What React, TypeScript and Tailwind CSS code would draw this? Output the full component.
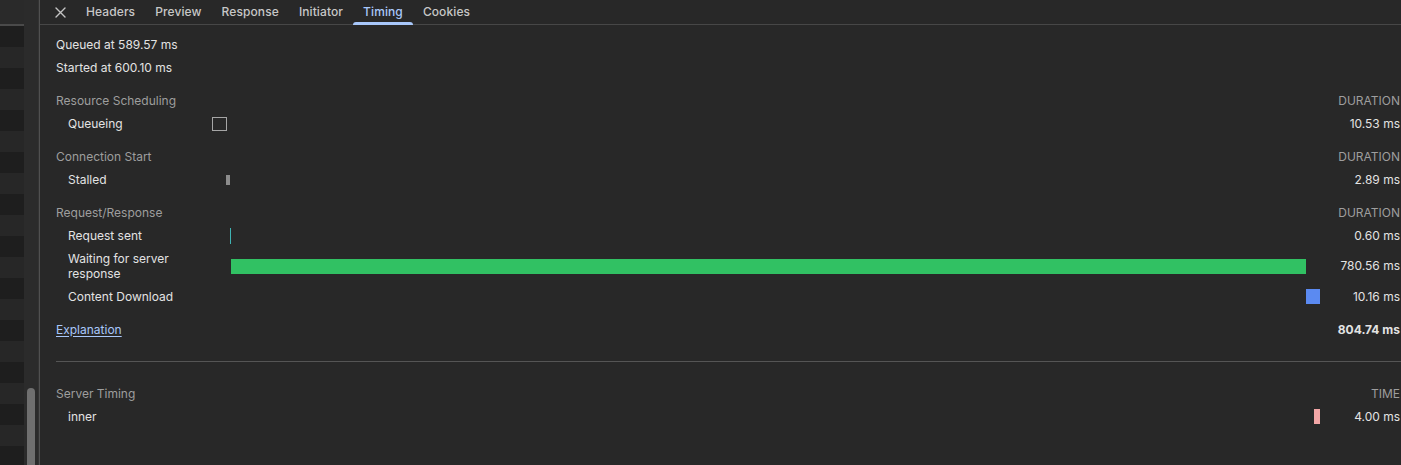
import React from "react";

const font = { fontFamily: "Inter, 'Noto Sans', 'Liberation Sans', sans-serif" };

function LeftStrip() {
  const rows = Array.from({ length: 21 });
  return (
    <div className="flex h-[465px] shrink-0">
      <div className="w-[24px] flex flex-col overflow-hidden bg-[#262626]">
        <div className="h-[24px] shrink-0 bg-[#2a2a2a]" />
        <div className="h-[2px] shrink-0 bg-[#4a4a4a]" />
        {rows.map((_, i) => (
          <div
            key={i}
            className={
              i % 2 === 0
                ? "h-[21px] shrink-0 bg-[#1e1e1e]"
                : "h-[21px] shrink-0 bg-[#272727]"
            }
          />
        ))}
      </div>
      <div className="w-[14px] bg-[#2b2b2b] flex flex-col justify-end items-center">
        <div className="w-[8px] h-[77px] rounded-t-[4px] bg-[#6f6f6f]" />
      </div>
      <div className="w-[1px] bg-[#333333]" />
      <div className="w-[1px] bg-[#505050]" />
    </div>
  );
}

function Tabs() {
  const tabs = ["Headers", "Preview", "Response", "Initiator", "Timing", "Cookies"];
  return (
    <div className="h-[25px] flex items-stretch border-b border-[#474747] bg-[#282828]">
      <div className="w-[36px] flex items-center justify-end pr-[10px]">
        <svg width="11" height="11" viewBox="0 0 11 11">
          <path d="M1 1 L10 10 M10 1 L1 10" stroke="#c4c4c4" strokeWidth="1.4" strokeLinecap="round" />
        </svg>
      </div>
      {tabs.map((t) => (
        <div key={t} className="relative px-[10px] flex items-center">
          <span
            className={
              t === "Timing"
                ? "text-[12px] font-medium tracking-[0.1px] text-[#a8c7fa]"
                : "text-[12px] font-medium tracking-[0.1px] text-[#c7c7c7]"
            }
          >
            {t}
          </span>
          {t === "Timing" && (
            <div className="absolute left-0 right-0 bottom-[-1px] h-[3px] rounded-t-[3px] bg-[#a8c7fa]" />
          )}
        </div>
      ))}
    </div>
  );
}

function Header({ label, right }: { label: string; right: string }) {
  return (
    <div className="grid grid-cols-[156px_1108px_80px] h-[23px] items-center">
      <span className="text-[12px] text-[#9e9e9e] whitespace-nowrap">{label}</span>
      <span />
      <span className="text-[12px] text-[#9e9e9e] text-right">{right}</span>
    </div>
  );
}

function Row({
  label,
  value,
  bar,
  tall,
  bold,
}: {
  label: React.ReactNode;
  value: string;
  bar: React.ReactNode;
  tall?: boolean;
  bold?: boolean;
}) {
  return (
    <div
      className={
        tall
          ? "grid grid-cols-[156px_1108px_80px] h-[38px] items-center"
          : "grid grid-cols-[156px_1108px_80px] h-[23px] items-center"
      }
    >
      <div className="pl-[12px] text-[12px] leading-[15px] text-[#e3e3e3]">{label}</div>
      <div className="relative h-full flex items-center">{bar}</div>
      <div
        className={
          bold
            ? "text-[12px] text-right font-bold text-[#e3e3e3]"
            : "text-[12px] text-right text-[#e3e3e3]"
        }
      >
        {value}
      </div>
    </div>
  );
}

export default function App() {
  return (
    <div className="flex w-[1401px] h-[465px] overflow-hidden bg-[#282828]" style={font}>
      <LeftStrip />
      <div className="flex-1 flex flex-col min-w-0">
        <Tabs />
        <div className="pl-[16px] pt-[8px] flex flex-col">
          <div className="h-[23px] flex items-center text-[12px] text-[#e3e3e3]">Queued at 589.57 ms</div>
          <div className="h-[23px] flex items-center text-[12px] text-[#e3e3e3]">Started at 600.10 ms</div>

          <div className="mt-[10px]">
            <Header label="Resource Scheduling" right="DURATION" />
            <Row
              label="Queueing"
              value="10.53 ms"
              bar={<div className="ml-0 w-[15px] h-[14px] border border-[#a6a6a6]" />}
            />
          </div>

          <div className="mt-[10px]">
            <Header label="Connection Start" right="DURATION" />
            <Row
              label="Stalled"
              value="2.89 ms"
              bar={<div className="ml-[14px] w-[4px] h-[10px] bg-[#8c8c8c]" />}
            />
          </div>

          <div className="mt-[10px]">
            <Header label="Request/Response" right="DURATION" />
            <Row
              label="Request sent"
              value="0.60 ms"
              bar={<div className="ml-[18px] w-[1px] h-[16px] bg-[#3fb3b3]" />}
            />
            <Row
              tall
              label={
                <span>
                  Waiting for server
                  <br />
                  response
                </span>
              }
              value="780.56 ms"
              bar={<div className="ml-[19px] w-[1075px] h-[15px] bg-[#31c163]" />}
            />
            <Row
              label="Content Download"
              value="10.16 ms"
              bar={<div className="ml-[1094px] w-[14px] h-[15px] bg-[#5b8af1]" />}
            />
          </div>

          <div className="mt-[10px] grid grid-cols-[156px_1108px_80px] h-[23px] items-center">
            <span className="text-[12px] text-[#a8c7fa] underline underline-offset-2">Explanation</span>
            <span />
            <span className="text-[12px] text-right font-bold text-[#e3e3e3]">804.74 ms</span>
          </div>

          <div className="mt-[20px] h-[1px] bg-[#555555]" />

          <div className="mt-[20px]">
            <Header label="Server Timing" right="TIME" />
            <Row
              label="inner"
              value="4.00 ms"
              bar={<div className="ml-[1102px] w-[6px] h-[15px] bg-[#f2a6a6]" />}
            />
          </div>
        </div>
      </div>
    </div>
  );
}
